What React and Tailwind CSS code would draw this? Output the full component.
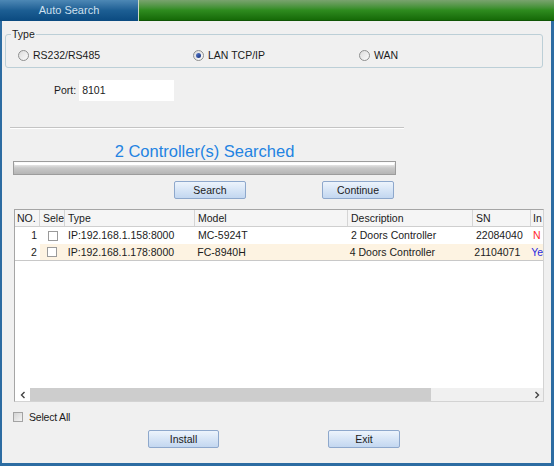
import React from "react";

function Radio({ label, checked }) {
	return (
		<div className="flex items-center gap-[4px]">
			<span className="w-[11px] h-[11px] rounded-full border border-[#8e8f8f] bg-gradient-to-br from-[#dcdcdc] to-[#fbfbfb] flex items-center justify-center">
				{checked && <span className="w-[5px] h-[5px] rounded-full bg-gradient-to-br from-[#5b7fd0] to-[#142c78]" />}
			</span>
			<span className="leading-[12px]">{label}</span>
		</div>
	);
}

function Button({ children, className = "" }) {
	return (
		<button
			className={
				"h-[18px] rounded-[2px] border border-[#8ea8cc] bg-gradient-to-b from-[#edf4fc] via-[#d7e5f6] to-[#c3d7f0] text-[10.5px] leading-[16px] text-[#1b1b1b] " +
				className
			}
		>
			{children}
		</button>
	);
}

function Check({ className = "" }) {
	return <span className={"block w-[10px] h-[10px] border border-[#9a9a9a] bg-white " + className} />;
}

function Chevron({ dir }) {
	return (
		<svg width="6" height="8" viewBox="0 0 6 8" className="block">
			<path
				d={dir === "left" ? "M4.5 1 L1.5 4 L4.5 7" : "M1.5 1 L4.5 4 L1.5 7"}
				fill="none"
				stroke="#444"
				strokeWidth="1.4"
			/>
		</svg>
	);
}

// last column is clipped by the window in the original
const rows = [
	{ no: 1, ip: "IP:192.168.1.158:8000", model: "MC-5924T", desc: "2 Doors Controller", sn: "22084040", inst: "N", color: "text-[#ff2a2a]", bg: "bg-white" },
	{ no: 2, ip: "IP:192.168.1.178:8000", model: "FC-8940H", desc: "4 Doors Controller", sn: "21104071", inst: "Ye", color: "text-[#2a2ae0]", bg: "bg-[#fdf3e2]" },
];

export default function App() {
	return (
		<div className="w-[554px] h-[466px] bg-white font-['Liberation_Sans',Arial,sans-serif] text-[10.5px] text-[#1b1b1b]">
			{/* title bar */}
			<div className="flex h-[21px]">
				<div className="w-[138px] bg-gradient-to-b from-[#4d88b5] via-[#1c5e93] to-[#0a4a80] text-center text-[11px] leading-[21px] text-[#cfe0ef]">
					Auto Search
				</div>
				<div className="w-px bg-[#c9d9c4]" />
				<div className="flex-1 bg-gradient-to-b from-[#79a36e] via-[#2f8c1f] to-[#156a07] border-b border-[#0f5405]" />
			</div>

			{/* window body */}
			<div className="h-[445px] bg-[#f0f0f0] border-l-2 border-r-[3px] border-b-[3px] border-[#2c6ca2] flex flex-col">
				{/* Type group */}
				<div className="relative mt-[13px] ml-[3px] w-[538px] h-[34px] border border-[#bccfd7] rounded-[3px]">
					<span className="absolute left-[5px] -top-[7px] px-[1px] bg-[#f0f0f0] leading-[12px]">Type</span>
					<div className="flex pt-[14px] pl-[12px]">
						<div className="w-[175px]">
							<Radio label="RS232/RS485" />
						</div>
						<div className="w-[166px]">
							<Radio label="LAN TCP/IP" checked />
						</div>
						<Radio label="WAN" />
					</div>
				</div>

				{/* Port */}
				<div className="flex items-center mt-[12px] ml-[52px] gap-[3px]">
					<span>Port:</span>
					<div className="w-[95px] h-[21px] bg-white pl-[3px] leading-[21px]">8101</div>
				</div>

				<div className="mt-[26px] ml-[8px] w-[394px] h-px bg-[#c4c4c4] border-b border-white box-content" />

				<div className="mt-[12px] ml-[11px] w-[383px] text-center text-[16.5px] leading-[20px] text-[#2383e2]">
					2 Controller(s) Searched
				</div>

				{/* progress */}
				<div className="ml-[11px] w-[383px] h-[14px] border border-[#9c9c9c] bg-gradient-to-b from-[#ffffff] via-[#c8c8c8] to-[#b5b5b5] p-[1px]">
					<div className="h-[2px] bg-white" />
				</div>

				<div className="flex mt-[6px] ml-[172px] gap-[76px]">
					<Button className="w-[72px]">Search</Button>
					<Button className="w-[72px]">Continue</Button>
				</div>

				{/* table */}
				<div className="mt-[10px] ml-[12px] w-[530px] h-[193px] border border-[#a5a5a5] border-r-[#d3d3d3] border-b-[#d3d3d3] bg-white flex flex-col overflow-hidden">
					<div className="flex h-[17px] bg-[#f5f5f5] border-b border-[#cfcfcf] leading-[16px] shrink-0">
						<div className="w-[25px] pl-[2px] border-r border-[#d5d5d5]">NO.</div>
						<div className="w-[25px] pl-[3px] border-r border-[#d5d5d5] overflow-hidden whitespace-nowrap">Sele</div>
						<div className="w-[130px] pl-[3px] border-r border-[#d5d5d5]">Type</div>
						<div className="w-[153px] pl-[3px] border-r border-[#d5d5d5]">Model</div>
						<div className="w-[125px] pl-[3px] border-r border-[#d5d5d5]">Description</div>
						<div className="w-[58px] pl-[3px] border-r border-[#d5d5d5]">SN</div>
						<div className="flex-1 pl-[2px] whitespace-nowrap">In</div>
					</div>
					{rows.map((r, i) => (
						<div
							key={r.no}
							className={"flex h-[17px] leading-[17px] shrink-0 " + (i === rows.length - 1 ? "border-b border-[#c8c8c8]" : "")}
						>
							<div className="w-[25px] pr-[3px] text-right bg-white">{r.no}</div>
							<div className={"w-[25px] flex items-center justify-center " + r.bg}>
								<Check />
							</div>
							<div className={"w-[130px] pl-[3px] " + r.bg}>{r.ip}</div>
							<div className={"w-[153px] pl-[3px] " + r.bg}>{r.model}</div>
							<div className={"w-[125px] pl-[3px] " + r.bg}>{r.desc}</div>
							<div className={"w-[58px] pl-[3px] " + r.bg}>{r.sn}</div>
							<div className={"flex-1 pl-[2px] whitespace-nowrap " + r.bg + " " + r.color}>{r.inst}</div>
						</div>
					))}
					<div className="flex-1" />
					{/* horizontal scrollbar */}
					<div className="flex h-[13px] bg-[#f0f0f0] shrink-0">
						<div className="w-[15px] bg-white flex items-center justify-center">
							<Chevron dir="left" />
						</div>
						<div className="w-[401px] bg-[#cdcdcd]" />
						<div className="flex-1" />
						<div className="w-[13px] flex items-center justify-center">
							<Chevron dir="right" />
						</div>
					</div>
				</div>

				{/* select all */}
				<div className="flex items-center mt-[10px] ml-[11px] gap-[6px]">
					<span className="block w-[10px] h-[10px] border border-[#a3a3a3] bg-gradient-to-br from-[#d4d4d4] to-[#f4f4f4]" />
					<span className="leading-[10px] tracking-[-0.2px]">Select All</span>
				</div>

				<div className="flex mt-[8px] ml-[146px] gap-[109px]">
					<Button className="w-[71px]">Install</Button>
					<Button className="w-[72px]">Exit</Button>
				</div>
			</div>
		</div>
	);
}
